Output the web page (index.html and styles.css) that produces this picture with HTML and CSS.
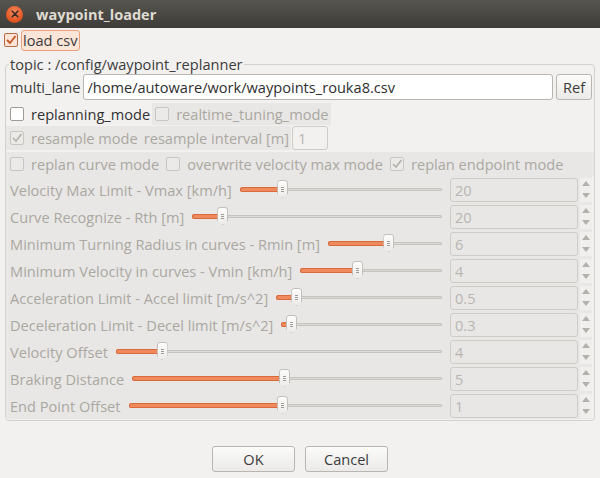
FILE: index.html
```html
<!DOCTYPE html>
<html>
<head>
<meta charset="utf-8">
<link rel="stylesheet" href="styles.css">
</head>
<body>
<div class="window">
  <div class="titlebar">
    <span class="close">
      <svg width="16" height="16" viewBox="0 0 16 16"><path d="M5.2 5.2 L10.8 10.8 M10.8 5.2 L5.2 10.8" stroke="#3a2a22" stroke-width="1.6" stroke-linecap="round"/></svg>
    </span>
    <span class="title">waypoint_loader</span>
  </div>

  <div class="loadrow">
    <span class="cb cb-on"><svg width="12" height="12" viewBox="0 0 12 12"><path d="M2 6 L5 9 L10.5 2" fill="none" stroke="#c8521d" stroke-width="1.8"/></svg></span>
    <span class="focuslabel">load csv</span>
  </div>

  <fieldset class="group">
    <legend>topic : /config/waypoint_replanner</legend>
    <div class="row lanerow">
      <span class="lbl">multi_lane</span>
      <span class="lineedit">/home/autoware/work/waypoints_rouka8.csv</span>
      <span class="btn refbtn">Ref</span>
    </div>
    <div class="row modes">
      <span class="cbwrap enabled"><span class="cb"></span><span>replanning_mode</span></span>
      <span class="cbwrap dis shade"><span class="cb cb-dis"></span><span>realtime_tuning_mode</span></span>
    </div>
    <div class="row resrow">
      <span class="cbwrap dis shade"><span class="cb cb-dis"><svg width="12" height="12" viewBox="0 0 12 12"><path d="M2 6 L5 9 L10.5 2" fill="none" stroke="#b5b1ab" stroke-width="1.6"/></svg></span><span>resample mode</span></span>
      <span class="dis lbl2 shade">resample interval [m]</span>
      <span class="smallspin">1</span>
    </div>
    <div class="row curverow">
      <span class="cbwrap dis"><span class="cb cb-dis"></span><span>replan curve mode</span></span>
      <span class="cbwrap dis"><span class="cb cb-dis"></span><span>overwrite velocity max mode</span></span>
      <span class="cbwrap dis"><span class="cb cb-dis"><svg width="12" height="12" viewBox="0 0 12 12"><path d="M2 6 L5 9 L10.5 2" fill="none" stroke="#b5b1ab" stroke-width="1.6"/></svg></span><span>replan endpoint mode</span></span>
    </div>

    <div class="sliders">
      <div class="srow"><span class="slbl">Velocity Max Limit - Vmax [km/h]</span><div class="slider"><div class="fill" style="width:21%"></div><span class="handle" style="left:21%"></span></div><div class="spin"><span class="sbox">20</span><span class="arrows"><i class="up"></i><i class="down"></i></span></div></div>
      <div class="srow"><span class="slbl">Curve Recognize - Rth [m]</span><div class="slider"><div class="fill" style="width:12%"></div><span class="handle" style="left:12%"></span></div><div class="spin"><span class="sbox">20</span><span class="arrows"><i class="up"></i><i class="down"></i></span></div></div>
      <div class="srow"><span class="slbl">Minimum Turning Radius in curves - Rmin [m]</span><div class="slider"><div class="fill" style="width:53%"></div><span class="handle" style="left:53%"></span></div><div class="spin"><span class="sbox">6</span><span class="arrows"><i class="up"></i><i class="down"></i></span></div></div>
      <div class="srow"><span class="slbl">Minimum Velocity in curves - Vmin [km/h]</span><div class="slider"><div class="fill" style="width:40%"></div><span class="handle" style="left:40%"></span></div><div class="spin"><span class="sbox">4</span><span class="arrows"><i class="up"></i><i class="down"></i></span></div></div>
      <div class="srow"><span class="slbl">Acceleration Limit - Accel limit [m/s^2]</span><div class="slider"><div class="fill" style="width:12%"></div><span class="handle" style="left:12%"></span></div><div class="spin"><span class="sbox">0.5</span><span class="arrows"><i class="up"></i><i class="down"></i></span></div></div>
      <div class="srow"><span class="slbl">Deceleration Limit - Decel limit [m/s^2]</span><div class="slider"><div class="fill" style="width:6%"></div><span class="handle" style="left:6%"></span></div><div class="spin"><span class="sbox">0.3</span><span class="arrows"><i class="up"></i><i class="down"></i></span></div></div>
      <div class="srow"><span class="slbl">Velocity Offset</span><div class="slider"><div class="fill" style="width:14%"></div><span class="handle" style="left:14%"></span></div><div class="spin"><span class="sbox">4</span><span class="arrows"><i class="up"></i><i class="down"></i></span></div></div>
      <div class="srow"><span class="slbl">Braking Distance</span><div class="slider"><div class="fill" style="width:49%"></div><span class="handle" style="left:49%"></span></div><div class="spin"><span class="sbox">5</span><span class="arrows"><i class="up"></i><i class="down"></i></span></div></div>
      <div class="srow"><span class="slbl">End Point Offset</span><div class="slider"><div class="fill" style="width:49%"></div><span class="handle" style="left:49%"></span></div><div class="spin"><span class="sbox">1</span><span class="arrows"><i class="up"></i><i class="down"></i></span></div></div>
    </div>
  </fieldset>

  <div class="buttons">
    <span class="btn dlgbtn">OK</span>
    <span class="btn dlgbtn">Cancel</span>
  </div>
</div>
</body>
</html>
```

FILE: styles.css
```css
html, body {
  margin: 0;
  padding: 0;
}
body {
  width: 600px;
  height: 478px;
  background: #f2f1f0;
  font-family: "Open Sans", "DejaVu Sans", sans-serif;
  font-size: 14.6px;
  color: #3c3c3c;
  overflow: hidden;
}
.window {
  display: flex;
  flex-direction: column;
  height: 478px;
}
.titlebar {
  height: 28px;
  background: linear-gradient(#57554f, #3d3c38);
  display: flex;
  align-items: center;
  padding-left: 6px;
  box-sizing: border-box;
}
.close {
  width: 17px;
  height: 17px;
  border-radius: 50%;
  background: radial-gradient(circle at 50% 35%, #f78a5e, #e0521f 70%, #b9431b);
  display: flex;
  align-items: center;
  justify-content: center;
}
.title {
  margin-left: 13px;
  color: #dfdbd2;
  font-weight: bold;
  font-size: 14.5px;
}
.loadrow {
  display: flex;
  align-items: center;
  height: 24px;
  padding: 0 0 0 4px;
}
.cb {
  width: 12px;
  height: 12px;
  border: 1px solid #9f9c97;
  border-radius: 2px;
  background: #fff;
  display: inline-flex;
  align-items: center;
  justify-content: center;
  flex: none;
}
.cb-on {
  border-color: #b86a45;
  background: #fbe3d7;
}
.cb-dis {
  border-color: #c9c6c1;
  background: #ebeae9;
}
.focuslabel {
  margin-left: 3px;
  border: 1px solid #eaa07c;
  border-radius: 3px;
  background: #fbe4d8;
  padding: 0 1px;
  line-height: 19px;
}
.group {
  margin: 4px 5px 0;
  padding: 0 0 1px 0;
  border: 1px solid #d3d1cd;
  border-radius: 4px;
  min-width: 0;
}
.group legend {
  padding: 0 1px;
  margin-left: 3px;
  color: #3c3c3c;
  line-height: 17px;
}
.row {
  display: flex;
  align-items: center;
}
.lanerow {
  height: 26px;
  margin-top: 1px;
  padding: 0 2px 0 4px;
}
.lbl {
  margin-right: 3px;
}
.lineedit {
  flex: 1;
  height: 24px;
  line-height: 24px;
  border: 1px solid #b9b6b1;
  border-radius: 3px;
  background: #fff;
  padding-left: 3px;
  color: #2f2f2f;
}
.btn {
  border: 1px solid #b9b6b1;
  border-radius: 3px;
  background: linear-gradient(#fbfbfa, #ebeae8);
  display: inline-flex;
  align-items: center;
  justify-content: center;
  box-sizing: border-box;
}
.refbtn {
  width: 36px;
  height: 26px;
  margin-left: 3px;
}
.modes {
  height: 24px;
  margin-top: 2px;
}
.cbwrap {
  display: inline-flex;
  align-items: center;
  gap: 7px;
  height: 22px;
  padding-left: 4px;
  padding-right: 2px;
  white-space: nowrap;
}
.cbwrap.enabled {
  color: #333;
}
.shade {
  background: #e8e7e6;
}
.modes .shade {
  padding-left: 3px;
}
.dis {
  color: #aba7a1;
}
.resrow {
  height: 24px;
}
.resrow .cbwrap {
  height: 24px;
}
.lbl2 {
  height: 24px;
  line-height: 24px;
  padding: 0 2px 0 4px;
  white-space: nowrap;
}
.smallspin {
  width: 36px;
  height: 24px;
  box-sizing: border-box;
  border: 1px solid #cfccc8;
  border-radius: 3px;
  margin-left: 1px;
  padding-left: 5px;
  line-height: 22px;
  color: #b9b5b0;
}
.curverow {
  height: 24px;
  align-self: flex-start;
  background: #e8e7e6;
  margin-top: 2px;
}
.curverow .cbwrap {
  padding-right: 3px;
}
.sliders {
  background: #e8e7e6;
  display: flex;
  flex-direction: column;
  margin-right: 2px;
}
.srow {
  display: flex;
  align-items: center;
  height: 27px;
  padding-left: 4px;
  color: #aba7a1;
}
.slbl {
  white-space: nowrap;
  margin-right: 8px;
}
.slider {
  flex: 1;
  height: 3px;
  position: relative;
  border-radius: 2px;
  background: #dcdad6;
  box-shadow: inset 0 0 0 1px #c6c3be;
  margin-right: 8px;
}
.fill {
  height: 5px;
  margin-top: -1px;
  border-radius: 3px;
  background: #ee8a5e;
  box-shadow: inset 0 0 0 1px #d96a3c;
}
.handle {
  position: absolute;
  top: -8px;
  width: 11px;
  height: 18px;
  margin-left: -5px;
  background:
    linear-gradient(#a09d98, #a09d98) 3px 6px / 3px 1px no-repeat,
    linear-gradient(#a09d98, #a09d98) 3px 8px / 3px 1px no-repeat,
    linear-gradient(#a09d98, #a09d98) 3px 10px / 3px 1px no-repeat,
    linear-gradient(#fdfdfc, #ecebea);
  border: 1px solid #c3c0bb;
  border-radius: 3px 3px 2px 2px;
  box-sizing: border-box;
  clip-path: polygon(0 0, 100% 0, 100% 76%, 50% 100%, 0 76%);
}
.spin {
  display: flex;
  align-items: center;
  flex: none;
}
.sbox {
  width: 128px;
  height: 24px;
  box-sizing: border-box;
  border: 1px solid #cfccc8;
  border-radius: 3px;
  padding-left: 4px;
  line-height: 22px;
  color: #b9b5b0;
}
.arrows {
  width: 12px;
  height: 24px;
  margin-left: 2px;
  display: flex;
  flex-direction: column;
  justify-content: space-around;
  align-items: center;
  background: #f0efee;
}
.arrows i {
  width: 0;
  height: 0;
  border-left: 4px solid transparent;
  border-right: 4px solid transparent;
}
.arrows .up {
  border-bottom: 5px solid #b4b1ac;
}
.arrows .down {
  border-top: 5px solid #b4b1ac;
}
.buttons {
  display: flex;
  justify-content: center;
  gap: 10px;
  margin-top: 25px;
}
.dlgbtn {
  width: 83px;
  height: 26px;
}
```
